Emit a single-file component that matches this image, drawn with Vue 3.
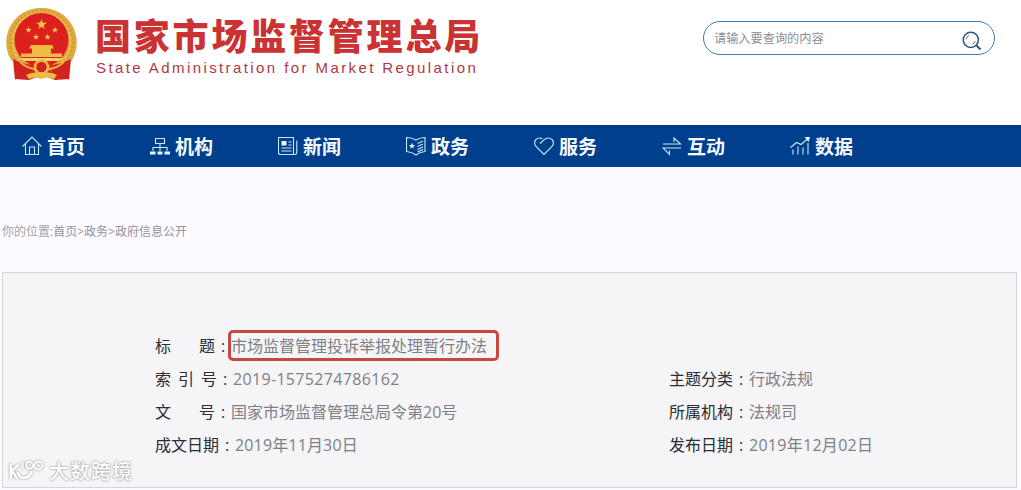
<template>
  <div class="page">
    <header class="header">
      <div class="brand">
        <svg class="emblem" viewBox="0 0 72 74">
          <path d="M9 50 L9 71 L23 72 L36 67 L49 72 L63 71 L63 50 Z" fill="#d3231f" />
          <path d="M35.5 0 A34.5 34.5 0 0 1 66 52 L56 58 H15 L5 52 A34.5 34.5 0 0 1 35.5 0 Z" fill="#e0aa40" />
          <circle cx="35.5" cy="34" r="31.5" fill="none" stroke="#cf9632" stroke-width="2" stroke-dasharray="1.6 2.6" />
          <circle cx="35.5" cy="34" r="28.8" fill="none" stroke="#f0ca5e" stroke-width="1.4" stroke-dasharray="3 2" />
          <circle cx="35.5" cy="32" r="27" fill="#dc201e" />
          <polygon v-for="(star, i) in stars" :key="i" :points="star" fill="#f6c744" />
          <path d="M25 37 H46 L48 40.5 H23 Z M26 40.5 H45 V46 H26 Z M15 45.5 H56 V49 H15 Z" fill="#efbc46" />
          <path d="M13 50 H58 L52 53 H19 Z" fill="#f4d268" />
          <path d="M7 51 Q16 56 27 57 L26 66 Q14 64 9 72 L8 62 Z" fill="#d3231f" />
          <path d="M65 51 Q56 56 45 57 L46 66 Q58 64 63 72 L64 62 Z" fill="#d3231f" />
          <path d="M14 54 Q22 61 30 61 M58 54 Q50 61 42 61" fill="none" stroke="#e6ae3c" stroke-width="2" />
          <circle cx="35.5" cy="59" r="6.5" fill="#d3231f" stroke="#eebb48" stroke-width="2.6" />
          <path d="M20 67 Q27 63 35.5 66 Q44 63 51 67 L48 71 Q41 68 35.5 71 Q29 68 23 71 Z" fill="#eebb48" />
        </svg>
        <div class="brand-text">
          <h1>国家市场监督管理总局</h1>
          <p>State Administration for Market Regulation</p>
        </div>
      </div>
      <div class="search">
        <span>请输入要查询的内容</span>
        <svg class="search-icon" viewBox="0 0 20 20">
          <circle cx="8.8" cy="8.8" r="7.6" />
          <path d="M14.5 14.5 L18.5 18.5" class="handle" />
          <path d="M4 8.5 Q4.5 5.5 7 4.3 M13.2 10 Q12.5 12.3 10.5 13.2" class="shine" />
        </svg>
      </div>
    </header>

    <nav class="nav">
      <a v-for="item in navItems" :key="item.name" class="nav-item">
        <svg class="nav-icon" viewBox="0 0 20 20">
          <path :d="item.path" />
          <path v-if="item.solid" :d="item.solid" class="solid" />
        </svg>
        <span>{{ item.name }}</span>
      </a>
    </nav>

    <div class="crumbs"><span class="crumb-label">你的位置:</span>首页&gt;政务&gt;政府信息公开</div>

    <main class="card">
      <div v-for="row in rows" :key="row.label" class="row">
        <div class="cell left">
          <span class="label" :class="row.kind"><i v-for="ch in row.label" :key="ch">{{ ch }}</i></span>
          <span class="colon">:</span>
          <span class="value" :class="[row.kind, { marked: row.marked }]">{{ row.value }}</span>
        </div>
        <div v-if="row.label2" class="cell">
          <span class="label2">{{ row.label2 }}</span>
          <span class="colon">:</span>
          <span class="value2" :class="row.kind">{{ row.value2 }}</span>
        </div>
      </div>
    </main>

    <div class="watermark">
      <svg class="wm-logo" viewBox="0 0 40 26">
        <path d="M3 7 V20 M10 7 L4 13 L9 20 M10 15 Q13 22 20 19 Q23 17 24 14" />
        <path d="M15 4 V10 M26 8 Q23 12 20 10 Q17 7 20 4 Q23 2 26 7 L28 10 Q31 13 34 10 Q37 6 34 4 Q31 2 28 5 L26 8" class="loops" />
      </svg>
      <span>大数跨境</span>
    </div>
  </div>
</template>

<script setup>
// 五角星顶点
const star = (cx, cy, r) => {
  const points = [];
  for (let i = 0; i < 10; i++) {
    const radius = i % 2 ? r * 0.4 : r;
    const angle = (Math.PI / 5) * i - Math.PI / 2;
    points.push(`${(cx + radius * Math.cos(angle)).toFixed(2)},${(cy + radius * Math.sin(angle)).toFixed(2)}`);
  }
  return points.join(' ');
};

const stars = [
  star(35.5, 16.5, 5.6),
  star(22.5, 22, 3.4),
  star(49, 22, 3.4),
  star(30, 29, 3.4),
  star(41.5, 29, 3.4)
];

const navItems = [
  { name: '首页', path: 'M.5 10.5 L10 1 L19.5 10.5 M3.5 8 V18.5 H16.5 V8 M7.5 18.5 V11 H12.5 V18.5' },
  {
    name: '机构',
    path: 'M5.5 2.5 H14.5 V7.5 H5.5 Z M10 7.5 V15 M3 15 V11.5 H17 V15',
    solid: 'M0 15.5 H5.5 V18.5 H0 Z M7.5 15.5 H12.5 V18.5 H7.5 Z M14.5 15.5 H20 V18.5 H14.5 Z'
  },
  {
    name: '新闻',
    path: 'M.5 1.5 H15.5 V18.5 H2.5 Q.5 18.5 .5 16.5 Z M15.5 18.5 H17 Q18.8 18.5 18.8 16 V4.5 M10.5 6 H13.5 M10.5 9 H13.5 M3.5 12 H13.5 M3.5 15 H13.5',
    solid: 'M3.5 5 H8.5 V9.5 H3.5 Z'
  },
  {
    name: '政务',
    path: 'M.5 1.5 Q6 1.5 10 4 Q14 1.5 19 1.5 V15.5 Q14 16 10 19 Q6 16 .5 15.5 Z M11.5 7.5 L17 5 M11.5 10.5 L17 8 M11.5 13.5 L17 11 M11.5 16 L17 13.5',
    solid: `M${star(6, 10, 3.4)}Z`
  },
  { name: '服务', path: 'M6 7.5 L10 3.8 Q14 .3 18 3.5 Q20.8 6.5 18 10.5 L10 18.5 L2 10.5 Q-.8 6.5 2 3.5 Q5 1 8.5 2.8' },
  { name: '互动', path: 'M1 8 H18.5 L12 2 V6 M19 12 H1 L7.5 18.5 V14.5' },
  {
    name: '数据',
    path: 'M.5 11.5 L6.5 6.5 L11 8.5 L18 2.5 M3 18.5 V13.5 M8 18.5 V10.5 M13 18.5 V11.5 M18 18.5 V7',
    solid: 'M14.5 1 H20 L18.5 6 Z'
  }
];

const rows = [
  { label: '标题', value: '市场监督管理投诉举报处理暂行办法', kind: 'two', marked: true },
  { label: '索引号', value: '2019-1575274786162', kind: 'three', label2: '主题分类', value2: '行政法规' },
  { label: '文号', value: '国家市场监督管理总局令第20号', kind: 'two', label2: '所属机构', value2: '法规司' },
  { label: '成文日期', value: '2019年11月30日', kind: 'four', label2: '发布日期', value2: '2019年12月02日' }
];
</script>

<style>
body {
  background: #fdfbff;
  overflow: hidden;
}
</style>

<style scoped>
.page {
  position: relative;
  width: 1021px;
  height: 490px;
  overflow: hidden;
  background: #fdfbff;
  font-family: "Open Sans", "Noto Sans CJK SC", sans-serif;
}

/* 顶部 */
.header {
  height: 125px;
  box-sizing: border-box;
  display: flex;
  justify-content: space-between;
  align-items: flex-start;
  padding: 7px 26px 0 6px;
  background: #fefffe;
}

.brand {
  display: flex;
}

.emblem {
  width: 72px;
  height: 74px;
  margin-top: 1px;
}

.brand-text {
  padding: 7px 0 0 17px;
}

.brand-text h1 {
  margin: 0;
  font: 900 36px/40px "Noto Sans CJK SC", sans-serif;
  letter-spacing: 2.8px;
  color: #cb3233;
  white-space: nowrap;
}

.brand-text p {
  margin: 5px 0 0 1px;
  font: 15px/18px "Liberation Sans", sans-serif;
  letter-spacing: 2.41px;
  color: #b03845;
  white-space: nowrap;
}

.search {
  width: 292px;
  height: 34px;
  margin-top: 14px;
  box-sizing: border-box;
  display: flex;
  align-items: center;
  justify-content: space-between;
  padding: 0 12px 0 10px;
  border: 1px solid #3d7fae;
  border-radius: 17px;
  font-size: 12.2px;
  color: #8e8e93;
}

.search-icon {
  width: 20px;
  height: 20px;
  margin-top: 5px;
  fill: none;
  stroke: #28567f;
  stroke-width: 1.5;
}

.search-icon .handle {
  stroke-width: 2;
}

.search-icon .shine {
  stroke-width: 0.8;
}

/* 导航 */
.nav {
  height: 42px;
  display: flex;
  align-items: center;
  padding-left: 22px;
  background: #003f8b;
}

.nav-item {
  width: 128px;
  display: flex;
  align-items: center;
  gap: 5px;
  font: bold 19px/42px "Noto Sans CJK SC", sans-serif;
  color: #f4faff;
}

.nav-icon {
  width: 20px;
  height: 20px;
  fill: none;
  stroke: #c9eafa;
  stroke-width: 1.1;
}

.nav-icon .solid {
  fill: #e4f6ff;
  stroke: none;
}

/* 面包屑 */
.crumbs {
  height: 105px;
  box-sizing: border-box;
  padding: 55px 0 0 2px;
  font-size: 12px;
  line-height: 20px;
  color: #92929f;
}

.crumb-label {
  color: #a2a2a8;
}

/* 信息表 */
.card {
  width: 1015px;
  height: 216px;
  margin-left: 2px;
  box-sizing: border-box;
  padding: 56px 0 0 152px;
  border: 1px solid #d6d5dc;
  background: #f5f4f7;
}

.row {
  display: flex;
  height: 33px;
  align-items: center;
  font-size: 16px;
  line-height: 24px;
  white-space: nowrap;
}

.cell {
  display: flex;
  align-items: center;
}

.cell.left {
  width: 514px;
}

.label {
  display: flex;
  justify-content: space-between;
  width: 60px;
  color: #2c2c34;
}

.label.three {
  width: 62px;
}

.label.four {
  width: 64px;
}

.label i {
  font-style: normal;
}

.colon {
  width: 16px;
  text-align: center;
  color: #2c2c34;
}

.label2 {
  width: 64px;
  color: #2c2c34;
}

.value,
.value2 {
  color: #808084;
}

.value.three {
  letter-spacing: 0.33px;
}

.value.four {
  letter-spacing: 0.15px;
}

.value2.four {
  letter-spacing: 0.28px;
}

.marked {
  position: relative;
}

.marked::after {
  content: "";
  position: absolute;
  left: -3px;
  top: -4px;
  width: 265px;
  height: 25px;
  border: 3px solid #c84740;
  border-radius: 5px;
}

/* 水印 */
.watermark {
  position: absolute;
  left: 8px;
  top: 456px;
  display: flex;
  align-items: center;
  gap: 2px;
  font: 500 20px/30px "Noto Sans CJK SC", sans-serif;
  letter-spacing: 1px;
  color: #fff;
  text-shadow: 0 0 2px #999, 0 0 2px #aaa;
}

.wm-logo {
  width: 39px;
  height: 26px;
  fill: none;
  stroke: #fff;
  stroke-width: 2.6;
  stroke-linecap: round;
  stroke-linejoin: round;
  filter: drop-shadow(0 0 1px #888);
}

.wm-logo .loops {
  stroke-width: 2;
}
</style>
